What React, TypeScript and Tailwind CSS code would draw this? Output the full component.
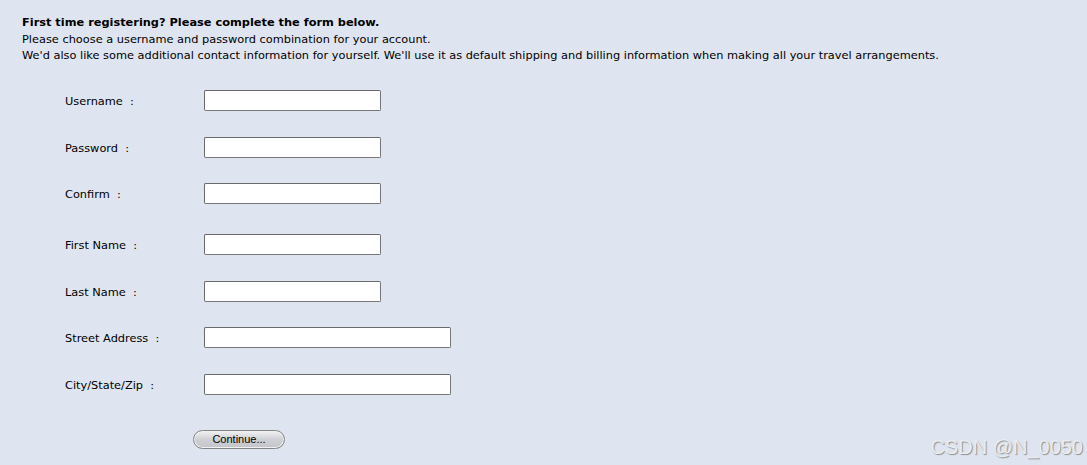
const fields = [
  { label: 'Username', wide: false, mt: 'mt-0' },
  { label: 'Password', wide: false, mt: 'mt-[26px]' },
  { label: 'Confirm', wide: false, mt: 'mt-[25px]' },
  { label: 'First Name', wide: false, mt: 'mt-[30px]' },
  { label: 'Last Name', wide: false, mt: 'mt-[26px]' },
  { label: 'Street Address', wide: true, mt: 'mt-[25px]' },
  { label: 'City/State/Zip', wide: true, mt: 'mt-[26px]' },
];

export default function App() {
  return (
    <div className="relative w-[1087px] h-[465px] overflow-hidden bg-[#dfe5f0] text-[11.35px] text-black font-['DejaVu_Sans',sans-serif]">
      <div className="pl-[22px] pt-[14px] leading-[16.5px]">
        <p className="font-bold">First time registering? Please complete the form below.</p>
        <p>Please choose a username and password combination for your account.</p>
        <p>We'd also like some additional contact information for yourself. We'll use it as default shipping and billing information when making all your travel arrangements.</p>
      </div>

      <form className="pl-[65px] pt-[26px]">
        {fields.map((f) => (
          <div key={f.label} className={`flex items-center ${f.mt}`}>
            <label className="w-[139px] pt-[3px]">{f.label}&nbsp; :</label>
            <input
              type="text"
              className={`h-[21px] ${f.wide ? 'w-[247px]' : 'w-[177px]'} bg-white border border-[#777777] border-t-[#6a6a6a] border-l-[#6a6a6a] rounded-[2px]`}
            />
          </div>
        ))}
        <div className="pl-[128px] mt-[35px]">
          <button
            type="button"
            className="w-[92px] h-[19px] rounded-full border border-[#858585] bg-gradient-to-b from-[#f2f2f4] via-[#cfd0d4] to-[#c4c5ca] text-[11px] leading-none font-['Liberation_Sans',sans-serif] shadow-[inset_0_0_0_1px_#f0f0f2]"
          >
            Continue...
          </button>
        </div>
      </form>

      <div className="absolute right-[4px] bottom-[8px] text-[20px] leading-none text-[#e9ecf1] font-['Liberation_Sans',sans-serif] [text-shadow:1px_1px_1px_#8f8f8f]">
        CSDN @N_0050
      </div>
    </div>
  );
}
